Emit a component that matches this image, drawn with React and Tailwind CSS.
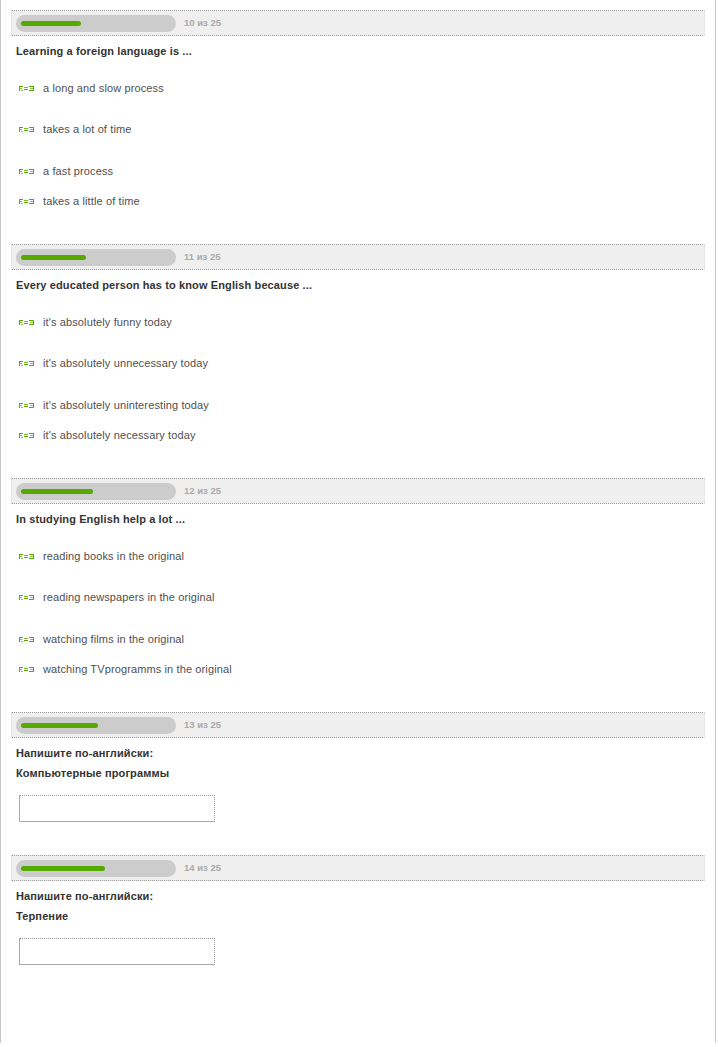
import React from 'react';

const questions = [
  {
    num: 10,
    bar: 60,
    text: 'Learning a foreign language is ...',
    options: ['a long and slow process', 'takes a lot of time', 'a fast process', 'takes a little of time'],
  },
  {
    num: 11,
    bar: 65,
    text: 'Every educated person has to know English because ...',
    options: ["it's absolutely funny today", "it's absolutely unnecessary today", "it's absolutely uninteresting today", "it's absolutely necessary today"],
  },
  {
    num: 12,
    bar: 72,
    text: 'In studying English help a lot ...',
    options: ['reading books in the original', 'reading newspapers in the original', 'watching films in the original', 'watching TVprogramms in the original'],
  },
];

const inputs = [
  { num: 13, bar: 77, word: 'Компьютерные программы' },
  { num: 14, bar: 84, word: 'Терпение' },
];

// gaps above each option row
const optionGaps = ['mt-[23px]', 'mt-[27px]', 'mt-[28px]', 'mt-[16px]'];

function Progress({ num, bar }) {
  return (
    <div className="flex items-center h-[26px] bg-[#efefef] border-y border-dotted border-y-[#999] border-x border-x-[#dddddd]">
      <div className="ml-[4px] w-[160px] h-[17px] rounded-full bg-[#cccccc] flex items-center pl-[5px]">
        <div className="h-[5px] rounded-full bg-[#55aa00]" style={{ width: bar }} />
      </div>
      <span className="ml-[8px] text-[9.5px] font-bold text-[#aaaaaa]">{num} из 25</span>
    </div>
  );
}

function RadioIcon() {
  return (
    <svg width="15" height="6" viewBox="0 0 15 6" className="shrink-0" shapeRendering="crispEdges">
      <rect x="0" y="1" width="4" height="1" fill="#55aa00" />
      <rect x="0" y="1" width="1" height="5" fill="#55aa00" />
      <rect x="0" y="3" width="3" height="1" fill="#77bb33" />
      <rect x="2" y="5" width="2" height="1" fill="#88c455" />
      <rect x="5" y="2" width="4" height="1" fill="#77bb33" />
      <rect x="5" y="4" width="4" height="1" fill="#55aa00" />
      <rect x="10" y="1" width="5" height="1" fill="#55aa00" />
      <rect x="11" y="3" width="3" height="1" fill="#88c455" />
      <rect x="10" y="5" width="5" height="1" fill="#55aa00" />
      <rect x="14" y="1" width="1" height="5" fill="#55aa00" />
    </svg>
  );
}

export default function App() {
  return (
    <div className="w-[716px] h-[1043px] border-x border-[#c8c8c8] px-[10px] pt-[10px] bg-white text-[#333333]" style={{ fontFamily: '"Liberation Sans", Arial, sans-serif' }}>
      {questions.map((q) => (
        <div key={q.num} className="mb-[36px]">
          <Progress num={q.num} bar={q.bar} />
          <div className="mt-[8px] pl-[5px] text-[11px] leading-[14px] font-bold tracking-[0.12px]">{q.text}</div>
          {q.options.map((o, i) => (
            <div key={o} className={`${optionGaps[i]} flex items-center h-[14px] pl-[8px]`}>
              <RadioIcon />
              <span className="ml-[9px] text-[11px] leading-[14px] text-[#505050] tracking-[0.12px]">{o}</span>
            </div>
          ))}
        </div>
      ))}
      {inputs.map((q) => (
        <div key={q.num} className="mb-[33px]">
          <Progress num={q.num} bar={q.bar} />
          <div className="mt-[8px] pl-[5px] text-[11px] leading-[14px] font-bold tracking-[0.12px]">Напишите по-английски:</div>
          <div className="mt-[6px] pl-[5px] text-[11px] leading-[14px] font-bold tracking-[0.12px]">{q.word}</div>
          <div className="mt-[15px] ml-[8px] w-[196px] h-[27px] border border-[#aaaaaa] [border-top-style:dotted] [border-right-style:dotted] border-t-[#999] border-r-[#999]" />
        </div>
      ))}
    </div>
  );
}
